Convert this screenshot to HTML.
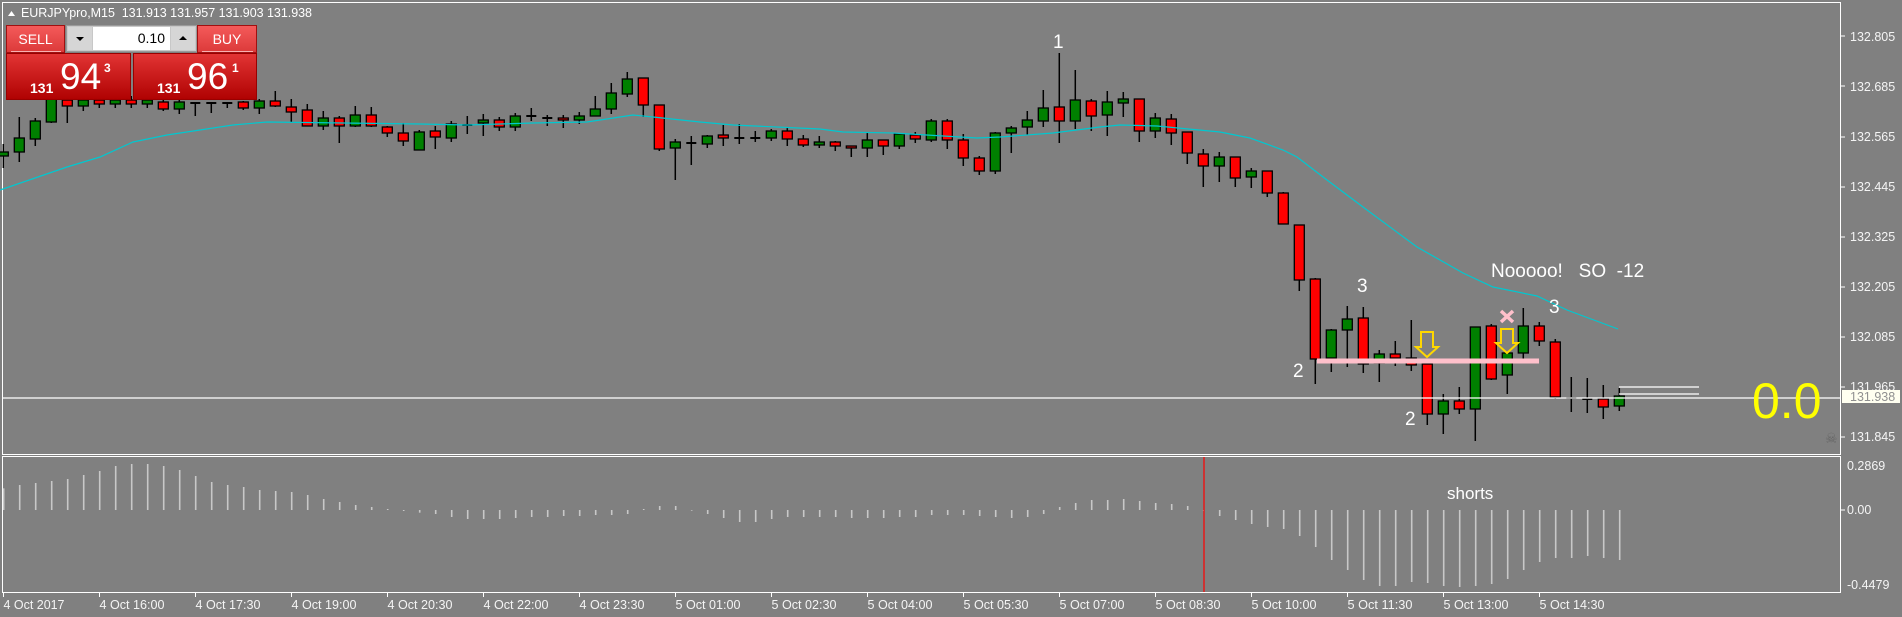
<!DOCTYPE html>
<html><head><meta charset="utf-8"><style>
html,body{margin:0;padding:0;background:#808080;}
body{width:1902px;height:617px;overflow:hidden;position:relative;font-family:"Liberation Sans",sans-serif;}
svg{position:absolute;left:0;top:0;}
.tp{position:absolute;}
</style></head><body>
<svg id="s" width="1902" height="617" xmlns="http://www.w3.org/2000/svg" font-family="Liberation Sans, sans-serif">
<rect x="0" y="0" width="1902" height="617" fill="#808080"/>
<rect x="2.5" y="2.5" width="1838" height="452" fill="none" stroke="#fff" stroke-width="1"/>
<rect x="2.5" y="456.5" width="1838" height="136" fill="none" stroke="#fff" stroke-width="1"/>
<g id="ao"></g>
<line x1="1204" y1="457" x2="1204" y2="592" stroke="#ff0000" stroke-width="1.2"/>
<g id="cd"></g>
<polyline fill="none" stroke="#00c8d0" stroke-width="1.2" points="0,190 67,167 100,157 133,142 167,135 200,130 233,125 267,122 420,124 467,125 533,123 587,122 633,115 653,117 700,122 733,125 820,129 843,132 893,133 977,138 1000,137 1053,133 1100,127 1120,125 1157,126 1220,132 1250,138 1283,150 1297,157 1327,180 1367,210 1417,247 1463,273 1493,287 1537,296 1567,310 1618,329"/>
<line x1="1317" y1="361" x2="1539" y2="361" stroke="#ffc0cb" stroke-width="5"/>
<line x1="3" y1="398" x2="1840" y2="398" stroke="#fff" stroke-width="1.2"/>
<line x1="1619" y1="387" x2="1699" y2="387" stroke="#fff" stroke-width="1.2"/>
<line x1="1619" y1="394" x2="1699" y2="394" stroke="#fff" stroke-width="1.2"/>
<path d="M1421,332 H1433 V347 H1438 L1427,357 L1416,347 H1421 Z" fill="none" stroke="#ffd700" stroke-width="2"/>
<path d="M1501,329 H1513 V343 H1518 L1507,353 L1496,343 H1501 Z" fill="none" stroke="#ffd700" stroke-width="2"/>
<path d="M1501,311 L1513,322 M1513,311 L1501,322" stroke="#ffc0cb" stroke-width="3.5"/>
<g fill="#fff" font-size="19">
<text x="1053" y="48">1</text>
<text x="1293" y="377">2</text>
<text x="1357" y="292">3</text>
<text x="1405" y="425">2</text>
<text x="1549" y="313">3</text>
<text x="1491" y="277">Nooooo!&#160;&#160;&#160;SO&#160;&#160;-12</text>
</g>
<text x="1752" y="418" fill="#ffff00" font-size="50">0.0</text>
<text x="1825" y="443" fill="#666" font-size="14">☠</text>
<text x="1447" y="499" fill="#fff" font-size="17">shorts</text>
<g fill="#f4f4f4" font-size="12.5">
<text x="1850" y="41">132.805</text><text x="1850" y="91">132.685</text><text x="1850" y="141">132.565</text>
<text x="1850" y="191">132.445</text><text x="1850" y="241">132.325</text><text x="1850" y="291">132.205</text>
<text x="1850" y="341">132.085</text><text x="1850" y="391">131.965</text><text x="1850" y="441">131.845</text>
<text x="1847" y="470">0.2869</text><text x="1847" y="514">0.00</text><text x="1847" y="589">-0.4479</text>
</g>
<g stroke="#fff" stroke-width="1">
<line x1="1840" y1="36" x2="1845" y2="36"/><line x1="1840" y1="86" x2="1845" y2="86"/><line x1="1840" y1="137" x2="1845" y2="137"/>
<line x1="1840" y1="187" x2="1845" y2="187"/><line x1="1840" y1="237" x2="1845" y2="237"/><line x1="1840" y1="287" x2="1845" y2="287"/>
<line x1="1840" y1="337" x2="1845" y2="337"/><line x1="1840" y1="387" x2="1845" y2="387"/><line x1="1840" y1="437" x2="1845" y2="437"/>
<line x1="1840" y1="510" x2="1845" y2="510"/>
</g>
<rect x="1842" y="390" width="58" height="13" fill="#fffff0"/>
<text x="1850" y="401" fill="#909090" font-size="12.5">131.938</text>
<g id="tl" fill="#f4f4f4" font-size="12.5"></g>
<path d="M8,16 L11.5,11 L15,16 Z" fill="#fff"/>
<text x="21" y="17" fill="#fff" font-size="12.5" textLength="291">EURJPYpro,M15&#160;&#160;131.913 131.957 131.903 131.938</text>
</svg>

<div class="tp" style="left:6px;top:25px;width:59px;height:28px;background:linear-gradient(#f45a5a,#dc3a3a);border:1px solid #a01010;box-sizing:border-box;color:#fff;font-size:14px;text-align:center;line-height:26px;">SELL<div style="position:absolute;left:4px;right:3px;bottom:0;height:1px;background:#f8b0b0"></div></div>
<div class="tp" style="left:197px;top:25px;width:60px;height:28px;background:linear-gradient(#f45a5a,#dc3a3a);border:1px solid #a01010;box-sizing:border-box;color:#fff;font-size:14px;text-align:center;line-height:26px;">BUY<div style="position:absolute;left:4px;right:3px;bottom:0;height:1px;background:#f8b0b0"></div></div>
<div class="tp" style="left:66px;top:25px;width:131px;height:27px;background:#c8c8c8;border:1px solid #9a9a9a;box-sizing:border-box;"></div>
<div class="tp" style="left:68px;top:27px;width:24px;height:23px;background:#d6d6d6;"><div style="position:absolute;left:8px;top:10px;border-left:4px solid transparent;border-right:4px solid transparent;border-top:4px solid #000"></div></div>
<div class="tp" style="left:93px;top:27px;width:77px;height:23px;background:#fff;color:#000;font-size:14px;text-align:right;line-height:23px;box-sizing:border-box;padding-right:5px;">0.10</div>
<div class="tp" style="left:171px;top:27px;width:24px;height:23px;background:#d6d6d6;"><div style="position:absolute;left:8px;top:9px;border-left:4px solid transparent;border-right:4px solid transparent;border-bottom:4px solid #000"></div></div>
<div class="tp" style="left:6px;top:53px;width:125px;height:47px;background:linear-gradient(#e23434,#b00202);border:1px solid #900;box-sizing:border-box;color:#fff;">
<span style="position:absolute;left:23px;top:26px;font-size:14px;font-weight:bold;">131</span>
<span style="position:absolute;left:53px;top:2px;font-size:37px;">94</span>
<span style="position:absolute;left:97px;top:7px;font-size:12px;font-weight:bold;">3</span></div>
<div class="tp" style="left:133px;top:53px;width:124px;height:47px;background:linear-gradient(#e23434,#b00202);border:1px solid #900;box-sizing:border-box;color:#fff;">
<span style="position:absolute;left:23px;top:26px;font-size:14px;font-weight:bold;">131</span>
<span style="position:absolute;left:53px;top:2px;font-size:37px;">96</span>
<span style="position:absolute;left:98px;top:7px;font-size:12px;font-weight:bold;">1</span></div>

<script>
var C=[["g",152,156,144,168],["g",138,152,117,162],["g",121,139,118,146],["g",99,122,95,123],["r",100,106,98,123],["g",100,106,98,111],["r",100,104,96,108],["g",100,104,96,108],["r",100,104,96,108],["g",100,104,96,108],
["r",102,109,100,111],["g",102,109,100,114],["c",103,103,103,116],["c",103,103,103,113],["c",103,103,103,108],["r",102,108,101,110],["g",101,108,99,114],["r",101,106,91,107],["r",107,112,99,122],["r",110,126,104,126],
["g",118,126,111,130],["r",118,126,116,143],["g",115,126,106,127],["r",115,126,107,127],["r",127,133,126,137],["r",133,141,123,146],["g",132,150,130,150],["r",131,137,126,149],["g",124,138,121,142],["c",125,125,116,134],
["g",120,123,114,136],["r",120,127,117,131],["g",116,127,113,131],["c",116,116,108,121],["c",118,118,115,126],["r",118,120,115,128],["g",116,120,112,124],["g",109,116,96,116],["g",93,109,83,114],["g",79,94,72,97],
["r",78,105,78,117],["r",105,149,105,151],["g",142,148,139,180],["c",143,143,136,165],["g",136,144,135,148],["r",135,138,125,146],["c",138,138,124,144],["c",138,138,131,142],["g",131,138,129,141],["r",131,139,128,146],
["r",139,145,135,147],["g",142,145,136,148],["r",142,146,141,151],["r",146,148,146,157],["g",140,148,133,157],["r",140,146,140,155],["g",134,146,134,149],["r",135,139,132,143],["g",121,140,119,142],["r",121,140,119,149],
["r",140,158,134,166],["r",158,171,156,175],["g",133,171,132,174],["g",128,133,126,153],["g",120,127,111,135],["g",108,121,90,127],["r",107,121,53,143],["g",100,121,70,129],["r",101,116,99,131],["g",102,115,91,136],
["g",99,103,92,117],["r",99,131,99,142],["g",118,131,113,138],["r",119,133,114,145],["r",132,153,132,164],["r",154,166,149,187],["g",157,166,152,182],["r",157,178,157,187],["g",171,177,168,188],["r",171,193,171,197],
["r",193,224,192,224],["r",225,280,225,291],["r",279,359,278,384],["g",330,358,329,372],["g",319,330,306,367],["r",318,364,307,373],["g",354,363,350,382],["r",354,358,341,366],["r",358,365,320,371],["r",364,414,361,425],
["g",401,414,394,434],["r",401,409,387,414],["g",327,409,327,441],["r",326,379,324,380],["g",353,375,353,394],["g",326,353,308,361],["r",326,341,322,346],["r",342,397,339,399],["c",398,398,377,412],["c",399,399,378,413],
["r",399,407,385,419],["g",396,406,388,411]];
var A=[100,90,84,78,72,60,48,33,27,27,33,45,63,81,90,96,105,108,111,120,132,141,150,156,162,168,173,177,186,192,192,192,189,186,186,183,183,180,180,177,162,153,153,167,177,189,201,201,192,186,186,186,186,189,189,189,186,186,180,180,180,183,186,189,186,177,156,144,135,135,132,138,144,147,153,168,183,195,207,216,222,243,276,315,345,375,393,393,381,384,393,396,393,387,372,345,321,309,309,303,309,315];
var ns="http://www.w3.org/2000/svg",cd=document.getElementById("cd"),ao=document.getElementById("ao"),tl=document.getElementById("tl");
function el(t,a,p){var e=document.createElementNS(ns,t);for(var k in a)e.setAttribute(k,a[k]);p.appendChild(e);return e;}
C.forEach(function(c,i){var x=3.3+16*i;
el("line",{x1:x,y1:c[3],x2:x,y2:c[4],stroke:"#000","stroke-width":1.5},cd);
if(c[0]=="c"){el("line",{x1:x-5,y1:c[1],x2:x+5,y2:c[1],stroke:"#000","stroke-width":2},cd);}
else el("rect",{x:x-5,y:c[1],width:10,height:Math.max(c[2]-c[1],2),fill:c[0]=="g"?"#008000":"#ff0000",stroke:"#000","stroke-width":1.3},cd);});
A.forEach(function(v,i){var x=3.7+16*i,y=455+v/3;el("line",{x1:x,y1:510,x2:x,y2:y,stroke:"#c8c8c8","stroke-width":1.6},ao);});
var L=["4 Oct 2017","4 Oct 16:00","4 Oct 17:30","4 Oct 19:00","4 Oct 20:30","4 Oct 22:00","4 Oct 23:30","5 Oct 01:00","5 Oct 02:30","5 Oct 04:00","5 Oct 05:30","5 Oct 07:00","5 Oct 08:30","5 Oct 10:00","5 Oct 11:30","5 Oct 13:00","5 Oct 14:30"];
L.forEach(function(t,i){var x=3.5+96*i;el("line",{x1:x,y1:593,x2:x,y2:597,stroke:"#fff"},tl);var e=el("text",{x:x,y:609,textLength:i==0?61:65,lengthAdjust:"spacingAndGlyphs"},tl);e.textContent=t;});
</script>
</body></html>
